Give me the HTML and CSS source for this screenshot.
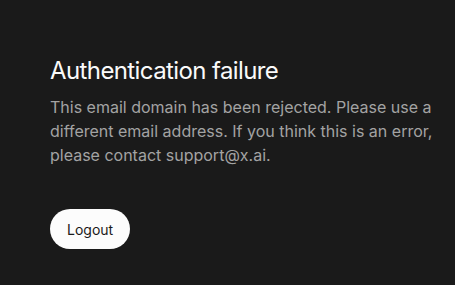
FILE: index.html
```html
<!DOCTYPE html>
<html>
<head>
<meta charset="utf-8">
<link rel="stylesheet" href="styles.css">
</head>
<body>
<main class="page">
  <section class="card">
    <h1 class="title">Authentication failure</h1>
    <p class="message">This email domain has been rejected. Please use a different email address. If you think this is an error, please contact support@x.ai.</p>
    <button class="btn">Logout</button>
  </section>
</main>
</body>
</html>
```

FILE: styles.css
```css
html, body {
  margin: 0;
  padding: 0;
  background: #1a1a1a;
  height: 100%;
}
.page {
  padding: 55px 0 0 50px;
  font-family: Inter, "Noto Sans", sans-serif;
}
.card {
  max-width: 384px;
  display: flex;
  flex-direction: column;
  align-items: flex-start;
}
.title {
  margin: 0;
  font-size: 24px;
  line-height: 32px;
  font-weight: 400;
  letter-spacing: -0.025em;
  color: #fafafa;
}
.message {
  margin: 8px 0 0;
  font-size: 16px;
  line-height: 24px;
  color: #a3a3a3;
}
.btn {
  margin-top: 42px;
  height: 40px;
  padding: 0 17px;
  border: none;
  border-radius: 20px;
  background: #fcfcfc;
  color: #1a1a1a;
  font-family: Inter, sans-serif;
  font-size: 14px;
}
```
